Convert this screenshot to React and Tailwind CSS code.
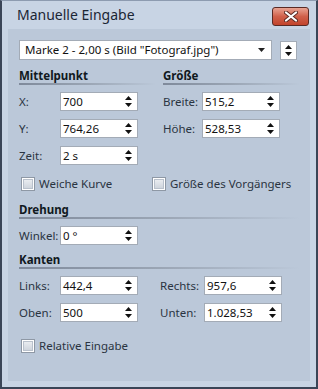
import React from 'react';

const font = { fontFamily: '"Segoe UI", "Noto Sans", "Open Sans", sans-serif' };

const Arrows = () => (
  <svg width="7" height="11" viewBox="0 0 7 11" className="shrink-0">
    <path d="M3.5 0 L7 4 L0 4 Z" fill="#111" />
    <path d="M0 7 L7 7 L3.5 11 Z" fill="#111" />
  </svg>
);

const Spin = ({ value }) => (
  <div className="w-[78px] h-[19px] bg-white border border-[#a3abb6] flex items-center pl-[2px] pr-[5px]">
    <span className="flex-1 text-[11.5px] leading-none text-[#111]">{value}</span>
    <Arrows />
  </div>
);

const Check = ({ label }) => (
  <div className="flex items-center gap-[4px] h-[14px]">
    <div className="w-[14px] h-[14px] border border-[#8e98a5] bg-white p-[1px]">
      <div className="w-full h-full bg-linear-to-b from-[#e9ecf0] to-[#cfd5dd] border border-[#b9c1cc]" />
    </div>
    <span className="text-[11.5px] text-[#2a3441] leading-none">{label}</span>
  </div>
);

const Header = ({ title, className = '' }) => (
  <div className={className}>
    <div className="text-[11.5px] font-bold text-[#101820] leading-[13px]">{title}</div>
    <div className="h-[2px] mt-[1px] bg-linear-to-r from-[#7f8a9b] via-[#9aa5b4] to-transparent" />
  </div>
);

const Row = ({ label, value, lw = 'w-[41px]' }) => (
  <div className="flex items-center h-[19px]">
    <span className={`${lw} text-[11.5px] text-[#2a3441]`}>{label}</span>
    <Spin value={value} />
  </div>
);

export default function App() {
  return (
    <div style={font} className="w-[318px] h-[389px] bg-[#c8d4e4] border-x-2 border-b-2 border-t border-t-[#8d9bb0] border-x-[#3a4557] border-b-[#3a4557] flex flex-col">
      {/* title bar */}
      <div className="h-[28px] flex items-start justify-between pl-[15px] pr-[7px]">
        <span className="text-[14px] text-[#1b2635] mt-[4px] leading-[20px]">Manuelle Eingabe</span>
        <div className="mt-[6px] w-[37px] h-[19px] rounded-[3px] border border-[#5a2a24] bg-linear-to-b from-[#e8a393] via-[#d0604a] to-[#c2442c] flex items-center justify-center">
          <svg width="14" height="11" viewBox="0 0 14 11">
            <path d="M2 1.5 L12 9.5 M12 1.5 L2 9.5" stroke="#5a2a24" strokeWidth="4" strokeLinecap="round" />
            <path d="M2 1.5 L12 9.5 M12 1.5 L2 9.5" stroke="#fff" strokeWidth="2.2" strokeLinecap="round" />
          </svg>
        </div>
      </div>

      {/* client area */}
      <div className="flex-1 mx-[6px] mb-[6px] bg-[#bbc8d9] pl-[11px] pr-[10px] pt-[11px]">
        <div className="flex items-center">
          <div className="w-[253px] h-[20px] bg-white border border-[#a3abb6] flex items-center pl-[5px] pr-[6px]">
            <span className="flex-1 text-[11.5px] text-[#111] leading-none">Marke 2 - 2,00 s (Bild "Fotograf.jpg")</span>
            <svg width="7" height="4" viewBox="0 0 7 4"><path d="M0 0 L7 0 L3.5 4 Z" fill="#222" /></svg>
          </div>
          <div className="ml-[8px] w-[17px] h-[19px] bg-white border border-[#a3abb6] flex items-center justify-center">
            <Arrows />
          </div>
        </div>

        <div className="flex mt-[9px]">
          <div className="w-[144px]">
            <Header title="Mittelpunkt" className="pr-[7px]" />
            <div className="flex flex-col gap-[8px] mt-[7px]">
              <Row label="X:" value="700" />
              <Row label="Y:" value="764,26" />
              <Row label="Zeit:" value="2 s" />
            </div>
          </div>
          <div className="flex-1">
            <Header title="Größe" />
            <div className="flex flex-col gap-[8px] mt-[7px]">
              <Row label="Breite:" value="515,2" lw="w-[39px]" />
              <Row label="Höhe:" value="528,53" lw="w-[39px]" />
            </div>
          </div>
        </div>

        <div className="flex mt-[12px] pl-[2px]">
          <div className="w-[131px]"><Check label="Weiche Kurve" /></div>
          <Check label="Größe des Vorgängers" />
        </div>

        <Header title="Drehung" className="mt-[12px]" />
        <div className="mt-[7px]"><Row label="Winkel:" value="0 °" /></div>

        <Header title="Kanten" className="mt-[8px]" />
        <div className="flex mt-[7px]">
          <div className="w-[141px] flex flex-col gap-[8px]">
            <Row label="Links:" value="442,4" />
            <Row label="Oben:" value="500" />
          </div>
          <div className="flex flex-col gap-[8px]">
            <Row label="Rechts:" value="957,6" lw="w-[44px]" />
            <Row label="Unten:" value="1.028,53" lw="w-[44px]" />
          </div>
        </div>

        <div className="mt-[17px] pl-[2px]"><Check label="Relative Eingabe" /></div>
      </div>
    </div>
  );
}
